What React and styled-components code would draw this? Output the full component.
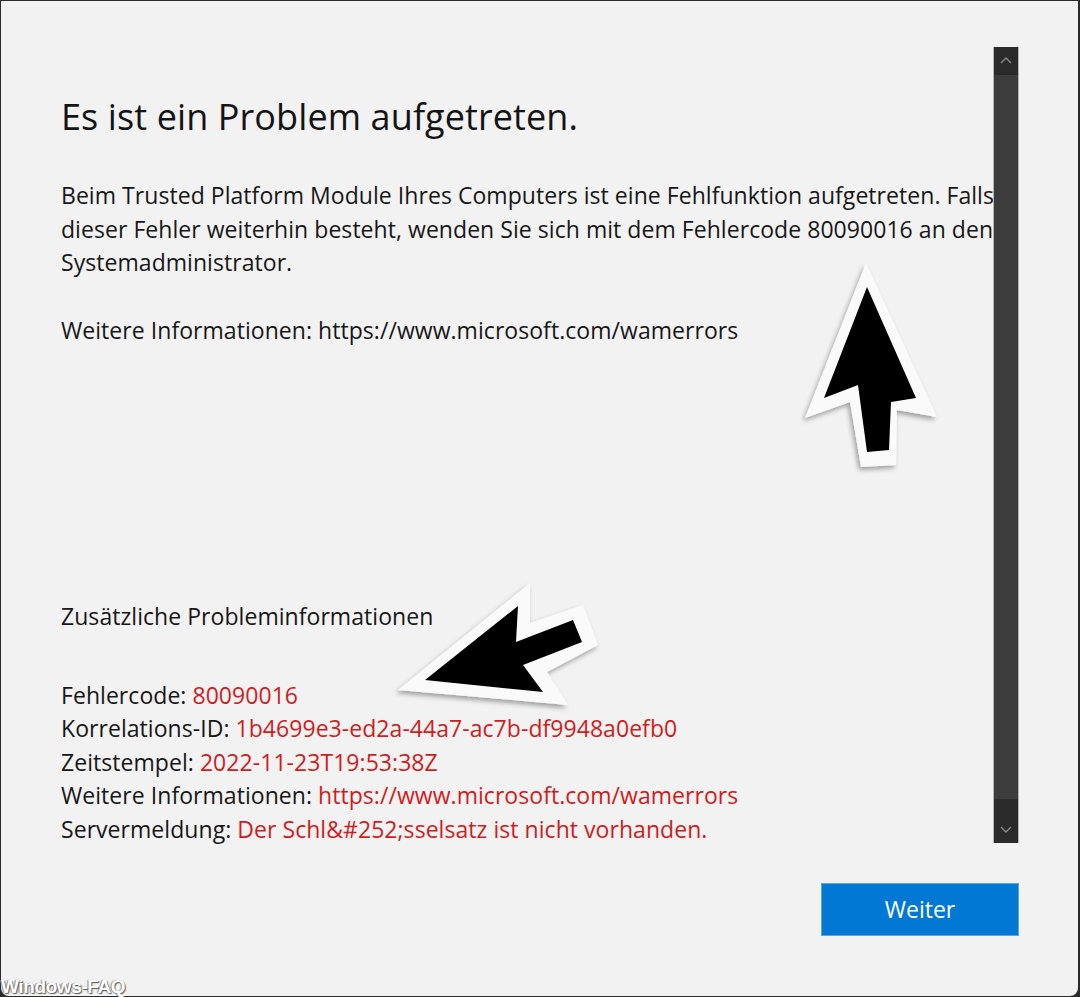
import React from "react";
import styled, { createGlobalStyle } from "styled-components";

const Global = createGlobalStyle`
  html, body { margin: 0; padding: 0; background: #2b2b2b; }
  * { box-sizing: border-box; }
`;

const Page = styled.div`
  position: relative;
  width: 1080px;
  height: 997px;
  display: flex;
  overflow: hidden;
  font-family: "Open Sans", "Noto Sans", sans-serif;
`;

const Window = styled.div`
  margin: 1px 2px 1px 1px;
  flex: 1;
  display: flex;
  flex-direction: column;
  background: #f2f2f2;
  border-radius: 0 0 8px 8px;
`;

const Main = styled.div`
  position: relative;
  flex: 1;
  overflow: hidden;
`;

const Content = styled.div`
  padding: 94px 0 0 60px;
  color: #171717;
  white-space: nowrap;
`;

const Heading = styled.h1`
  margin: 0;
  font-size: 36px;
  line-height: 44px;
  font-weight: 400;
  letter-spacing: 0.1px;
  color: #141414;
`;

const Para = styled.p`
  margin: ${(p) => p.$top}px 0 0 0;
  font-size: 23px;
  line-height: 33.5px;
  letter-spacing: 0.05px;
`;

const Value = styled.span`
  color: #cf1d1d;
`;

const Scrollbar = styled.div`
  position: absolute;
  left: 992px;
  top: 46px;
  width: 26px;
  height: 796px;
  display: flex;
  flex-direction: column;
  background: #2a2a2a;
  border-left: 1px solid #b5b5b5;
  border-right: 1px solid #b5b5b5;
`;

const ArrowBtn = styled.div`
  height: 26px;
  display: flex;
  align-items: center;
  justify-content: center;
  background: #2a2a2a;
`;

const Thumb = styled.div`
  margin-top: 2px;
  height: 724px;
  background: #3c3c3c;
`;

const Track = styled.div`
  flex: 1;
`;

const Footer = styled.div`
  display: flex;
  justify-content: flex-end;
  padding: 0 59px 60px 0;
`;

const Button = styled.button`
  width: 198px;
  height: 53px;
  background: #0078d4;
  border: 1px solid #5aa6e2;
  color: #ffffff;
  font-family: "Open Sans", "Noto Sans", sans-serif;
  font-size: 23px;
  padding: 0 0 2px 0;
  cursor: pointer;
`;

const Overlay = styled.svg`
  position: absolute;
  left: 0;
  top: 0;
  width: 1080px;
  height: 997px;
  pointer-events: none;
`;

const Watermark = styled.div`
  position: absolute;
  left: 1px;
  bottom: -1px;
  font-family: "Liberation Sans", Arial, sans-serif;
  font-weight: 700;
  font-size: 19px;
  line-height: 22px;
  letter-spacing: -0.4px;
  color: #ffffff;
  text-shadow: 1px 1px 1px #555, -1px 0 1px #888;
  pointer-events: none;
`;

const Chevron = ({ up }) => (
  <svg width="12" height="8" viewBox="0 0 12 8">
    <path
      d={up ? "M1 7 L6 2 L11 7" : "M1 1 L6 6 L11 1"}
      fill="none"
      stroke="#8c8c8c"
      strokeWidth="1.3"
    />
  </svg>
);

export default function App() {
  return (
    <Page>
      <Global />
      <Window>
        <Main>
          <Content>
            <Heading>Es ist ein Problem aufgetreten.</Heading>
            <Para $top={40}>
              Beim Trusted Platform Module Ihres Computers ist eine Fehlfunktion aufgetreten. Falls
              <br />
              dieser Fehler weiterhin besteht, wenden Sie sich mit dem Fehlercode 80090016 an den
              <br />
              Systemadministrator.
            </Para>
            <Para $top={34}>Weitere Informationen: https://www.microsoft.com/wamerrors</Para>
            <Para $top={253}>Zusätzliche Probleminformationen</Para>
            <Para $top={45}>
              Fehlercode: <Value>80090016</Value>
              <br />
              Korrelations-ID: <Value>1b4699e3-ed2a-44a7-ac7b-df9948a0efb0</Value>
              <br />
              Zeitstempel: <Value>2022-11-23T19:53:38Z</Value>
              <br />
              Weitere Informationen: <Value>https://www.microsoft.com/wamerrors</Value>
              <br />
              Servermeldung: <Value>Der Schl&amp;#252;sselsatz ist nicht vorhanden.</Value>
            </Para>
          </Content>
          <Scrollbar>
            <ArrowBtn>
              <Chevron up />
            </ArrowBtn>
            <Thumb />
            <Track />
            <ArrowBtn>
              <Chevron />
            </ArrowBtn>
          </Scrollbar>
        </Main>
        <Footer>
          <Button>Weiter</Button>
        </Footer>
      </Window>
      <Overlay viewBox="0 0 1080 997">
        <defs>
          <filter id="sh" x="-20%" y="-20%" width="140%" height="140%">
            <feDropShadow dx="-2" dy="3" stdDeviation="2.5" floodColor="#000" floodOpacity="0.35" />
          </filter>
        </defs>
        <g filter="url(#sh)">
          <polygon
            points="866,263 805,418 850,402 861,467 896,465 897,410 937,417"
            fill="#fafafa"
          />
          <polygon
            points="398,690 530,583 530,623 583,605 598,645 547,672 568,705"
            fill="#fafafa"
          />
        </g>
        <polygon points="867,287 824,398 858,385 867,452 889,450 891,402 916,398" fill="#000" />
        <polygon points="425,680 518,606 516,642 573,620 582,642 523,665 543,692" fill="#000" />
      </Overlay>
      <Watermark>Windows-FAQ</Watermark>
    </Page>
  );
}
